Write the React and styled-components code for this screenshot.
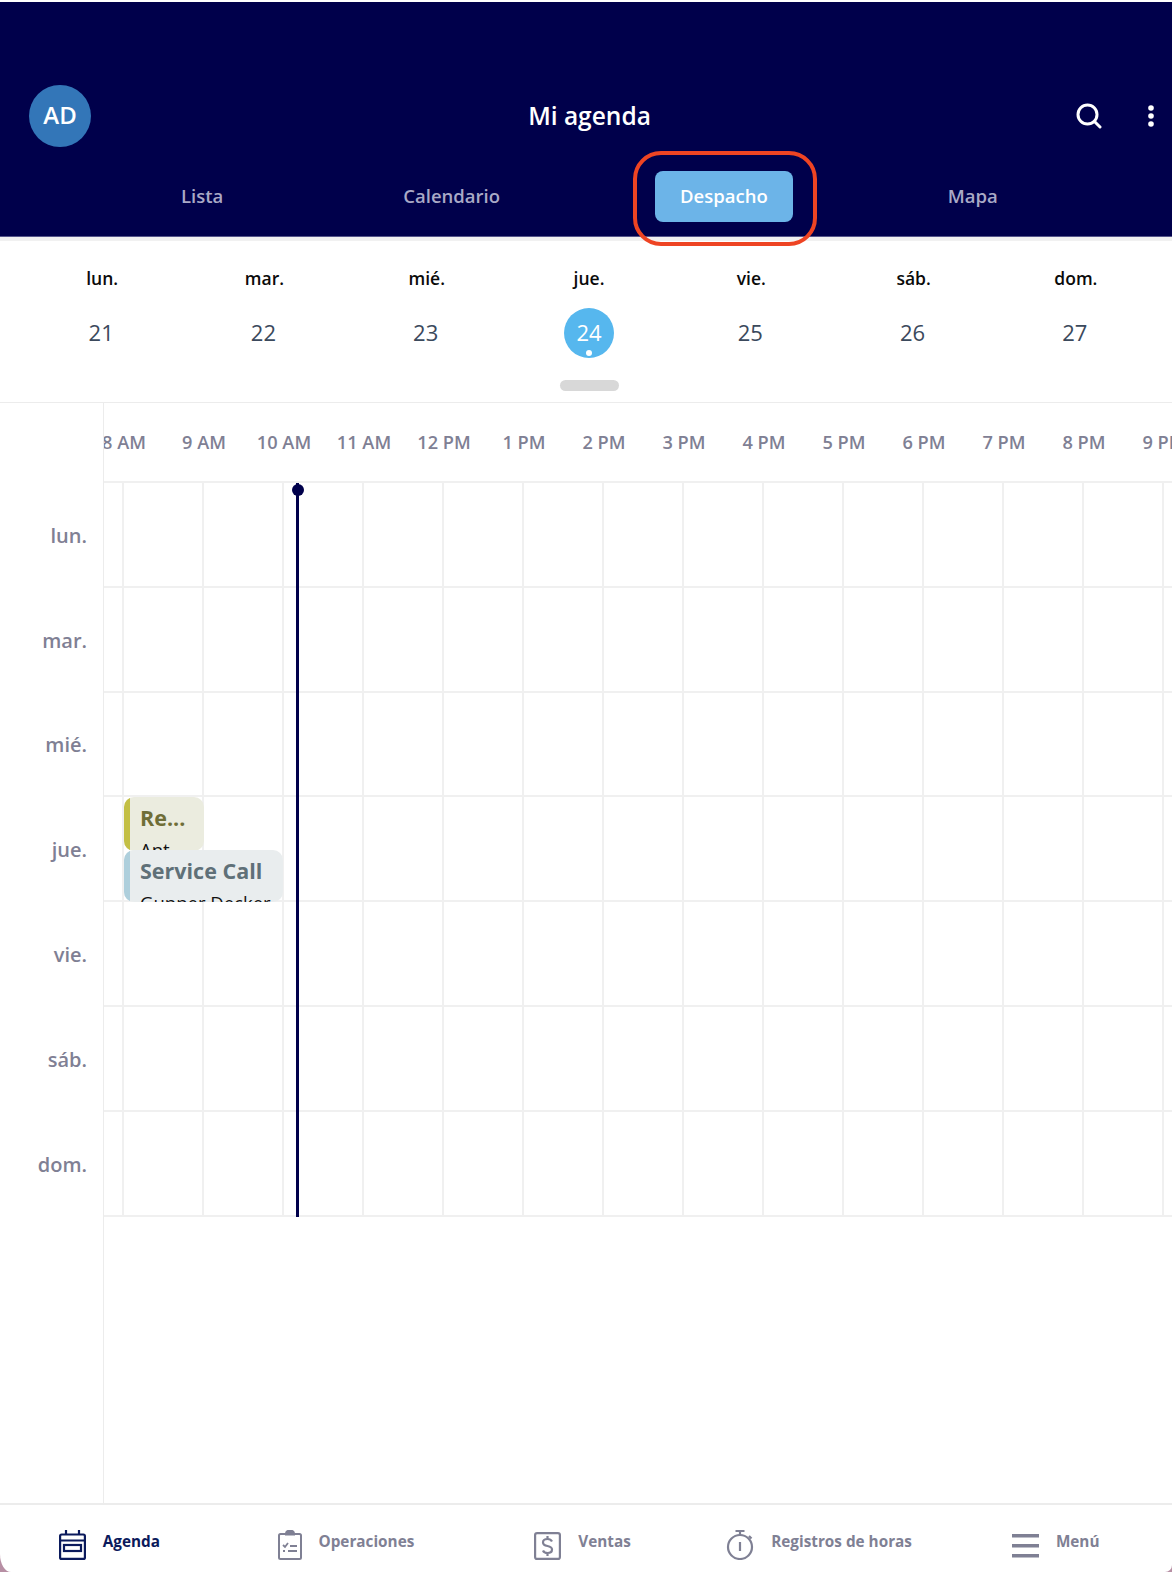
import React from 'react';
import styled, { createGlobalStyle } from 'styled-components';

const GlobalStyle = createGlobalStyle`
	html, body {
		margin: 0;
		padding: 0;
		background: #b78fa4;
	}
	body {
		font-family: 'Open Sans', 'Liberation Sans', sans-serif;
	}
`;

const Page = styled.div`
	height: 1572px;
	display: flex;
	flex-direction: column;
	overflow: hidden;
	background: #ffffff;
	padding-top: 2px;
	box-sizing: border-box;
	border-bottom-left-radius: 11px 18px;
	border-bottom-right-radius: 7px 7px;
`;

const Header = styled.header`
	height: 235px;
	flex-shrink: 0;
	box-sizing: border-box;
	background: #00004b;
	padding-top: 83px;
	border-bottom: 1px solid #55558a;
`;

const HeaderBar = styled.div`
	display: grid;
	grid-template-columns: 1fr auto 1fr;
	align-items: center;
	padding: 0 18px 0 25px;
`;

const Avatar = styled.div`
	width: 62px;
	height: 62px;
	box-sizing: border-box;
	padding-bottom: 3px;
	margin-left: 4px;
	border-radius: 50%;
	background: #3376b8;
	color: #ffffff;
	font-size: 24px;
	font-weight: 600;
	display: flex;
	align-items: center;
	justify-content: center;
`;

const Title = styled.h1`
	margin: 0 0 2px;
	color: #ffffff;
	font-size: 24.5px;
	font-weight: 600;
`;

const HeaderActions = styled.div`
	display: flex;
	justify-content: flex-end;
	align-items: center;
	gap: 46px;
`;

const Tabs = styled.nav`
	display: flex;
	align-items: center;
	gap: 155px;
	height: 51px;
	margin-top: 24px;
	padding-left: 181px;
`;

const Tab = styled.div`
	position: relative;
	color: ${(props) => (props.$active ? '#ffffff' : '#a9a9c6')};
	font-size: 18.5px;
	font-weight: 600;
	line-height: 50px;
	height: 51px;
	padding: 0 ${(props) => (props.$active ? '25px' : '0')};
	border-radius: 8px;
	background: ${(props) => (props.$active ? '#6cb4e8' : 'transparent')};
	&:first-child {
		margin-right: 25px;
	}
`;

// red annotation drawn round the active tab
const Callout = styled.span`
	position: absolute;
	top: -20px;
	left: -22px;
	right: -24px;
	bottom: -24px;
	border: 4px solid #ee4423;
	border-radius: 28px;
	z-index: 2;
`;

const HeaderShadow = styled.div`
	height: 4px;
	flex-shrink: 0;
	background: #f1f1f1;
`;

const Week = styled.section`
	height: 161px;
	flex-shrink: 0;
	box-sizing: border-box;
	padding: 0 15px 0 21px;
	display: flex;
	flex-direction: column;
`;

const WeekDays = styled.div`
	display: grid;
	grid-template-columns: repeat(7, 1fr);
`;

const WeekDay = styled.div`
	display: flex;
	flex-direction: column;
	align-items: center;
`;

const DayName = styled.div`
	margin-top: 25px;
	height: 24px;
	line-height: 24px;
	font-size: 17.5px;
	font-weight: 600;
	color: #0a0a0a;
`;

const DayNumber = styled.div`
	position: relative;
	margin-top: 18px;
	width: 50px;
	height: 50px;
	box-sizing: border-box;
	padding-bottom: 2px;
	padding-right: ${(props) => (props.$today ? '0' : '2px')};
	border-radius: 50%;
	display: flex;
	align-items: center;
	justify-content: center;
	font-size: 22px;
	color: ${(props) => (props.$today ? '#ffffff' : '#3b495c')};
	background: ${(props) => (props.$today ? '#56b7ee' : 'transparent')};
`;

const TodayDot = styled.span`
	position: absolute;
	bottom: 2px;
	left: 22px;
	width: 6px;
	height: 6px;
	border-radius: 50%;
	background: #ffffff;
`;

const Handle = styled.div`
	width: 59px;
	height: 11px;
	margin: 22px auto 0;
	border-radius: 6px;
	background: #d8d8d8;
`;

const Schedule = styled.section`
	flex: 1;
	display: flex;
	min-height: 0;
	border-top: 1px solid #ececec;
`;

const DayColumn = styled.div`
	width: 104px;
	flex-shrink: 0;
	box-sizing: border-box;
	border-right: 1px solid #ececec;
	padding-top: 80px;
`;

const DayLabel = styled.div`
	height: 104.8px;
	display: flex;
	align-items: center;
	justify-content: flex-end;
	padding-right: 16px;
	font-size: 20px;
	font-weight: 600;
	color: #7f8094;
`;

const Timeline = styled.div`
	flex: 1;
	min-width: 0;
	overflow: hidden;
`;

const Hours = styled.div`
	height: 80px;
	box-sizing: border-box;
	display: flex;
	align-items: center;
	margin-left: -20px;
	width: 1300px;
	border-bottom: 2px solid #f0f0f0;
`;

const Hour = styled.div`
	width: 80px;
	flex-shrink: 0;
	text-align: center;
	font-size: 18.2px;
	font-weight: 600;
	color: #7f8094;
`;

const Grid = styled.div`
	position: relative;
	width: 1300px;
`;

const Row = styled.div`
	height: 104.8px;
	box-sizing: border-box;
	display: flex;
	border-bottom: 2px solid #f0f0f0;
`;

const Cell = styled.div`
	width: ${(props) => (props.$first ? '20px' : '80px')};
	flex-shrink: 0;
	box-sizing: border-box;
	border-right: 2px solid #f0f0f0;
`;

const NowLine = styled.div`
	position: absolute;
	top: 0;
	bottom: 0;
	left: 192px;
	width: 3px;
	background: #00004b;
	&::before {
		content: '';
		position: absolute;
		top: 1px;
		left: -4.5px;
		width: 12px;
		height: 12px;
		border-radius: 50%;
		background: #00004b;
	}
`;

const Event = styled.div`
	position: absolute;
	left: 20px;
	top: ${(props) => props.$top}px;
	width: ${(props) => props.$width}px;
	height: ${(props) => props.$height}px;
	box-sizing: border-box;
	overflow: hidden;
	border-radius: 10px;
	background: ${(props) => props.$bg};
	padding: 5px 4px 0 16px;
	&::before {
		content: '';
		position: absolute;
		top: 0;
		bottom: 0;
		left: 0;
		width: 6px;
		background: ${(props) => props.$accent};
	}
`;

const EventTitle = styled.div`
	font-size: 21.5px;
	line-height: 32px;
	font-weight: 700;
	white-space: nowrap;
	color: ${(props) => props.$color};
`;

const EventPerson = styled.div`
	margin-top: 4px;
	font-size: 18.5px;
	line-height: 24px;
	white-space: nowrap;
	color: #111111;
`;

const BottomNav = styled.nav`
	height: 69px;
	flex-shrink: 0;
	box-sizing: border-box;
	border-top: 2px solid #ececec;
	width: 1183px;
	margin-left: -9px;
	display: grid;
	grid-template-columns: repeat(5, 1fr);
	padding-top: 25px;
`;

const NavItem = styled.div`
	display: flex;
	justify-content: center;
	align-items: flex-start;
	gap: 17px;
	height: 32px;
	color: ${(props) => (props.$active ? '#0b1a5c' : '#7f8094')};
`;

const NavLabel = styled.span`
	font-size: 15.3px;
	line-height: 22px;
	font-weight: 700;
	white-space: nowrap;
`;

const SearchIcon = () => (
	<svg width="26" height="26" viewBox="0 0 26 26" fill="none" stroke="#fff" strokeWidth="3" strokeLinecap="round">
		<circle cx="11.5" cy="11.5" r="9.5" />
		<line x1="18.5" y1="18.5" x2="24" y2="24" />
	</svg>
);

const DotsIcon = () => (
	<svg width="6" height="24" viewBox="0 0 6 24" fill="#fff">
		<circle cx="3" cy="4" r="2.8" />
		<circle cx="3" cy="12" r="2.8" />
		<circle cx="3" cy="20" r="2.8" />
	</svg>
);

const CalendarIcon = () => (
	<svg width="27" height="30" viewBox="0 0 27 30" fill="none" stroke="currentColor" strokeWidth="2.2">
		<rect x="1.1" y="4.5" width="24.8" height="24.4" rx="1.5" />
		<path d="M7 0v5M20 0v5M1 10.5h25" />
		<rect x="5" y="15" width="17" height="6" />
	</svg>
);

const ClipboardIcon = () => (
	<svg width="24" height="30" viewBox="0 0 24 30" fill="none" stroke="currentColor" strokeWidth="2">
		<rect x="1" y="4" width="22" height="25" rx="1.5" />
		<path d="M8 4.5V3.5a4 3 0 0 1 8 0v1z" fill="currentColor" />
		<path d="M5 15l2 2 3-4M12 16h7M5 21h2M10 21h9" strokeWidth="1.8" />
	</svg>
);

const DollarIcon = () => (
	<svg width="27" height="30" viewBox="0 0 27 30" fill="none" stroke="currentColor" strokeWidth="2.2">
		<rect x="1.1" y="3.1" width="24.8" height="25.8" rx="2" />
		<path d="M18 11.5c-.8-1.600-2.400-2.500-4.500-2.500-2.700 0-4.500 1.400-4.500 3.500 0 2.200 1.900 3 4.500 3.500s4.500 1.300 4.500 3.500c0 2.100-1.800 3.500-4.500 3.500-2.200 0-3.800-.9-4.500-2.500M13.500 6v3M13.500 23v3" />
	</svg>
);

const TimerIcon = () => (
	<svg width="28" height="30" viewBox="0 0 28 30" fill="none" stroke="currentColor" strokeWidth="2.2">
		<circle cx="14" cy="17" r="12" />
		<path d="M9.5 1h9M14 1v4M23 6l2.500 2.500M14 12v9" />
	</svg>
);

const MenuIcon = () => (
	<svg width="27" height="30" viewBox="0 0 27 30" fill="currentColor">
		<rect y="4" width="27" height="3.5" />
		<rect y="14" width="27" height="3.5" />
		<rect y="24" width="27" height="3.5" />
	</svg>
);

const weekDays = [
	['lun.', 21],
	['mar.', 22],
	['mié.', 23],
	['jue.', 24],
	['vie.', 25],
	['sáb.', 26],
	['dom.', 27],
];

const hours = ['8 AM', '9 AM', '10 AM', '11 AM', '12 PM', '1 PM', '2 PM', '3 PM', '4 PM', '5 PM', '6 PM', '7 PM', '8 PM', '9 PM'];

const navItems = [
	{ label: 'Agenda', icon: <CalendarIcon />, active: true },
	{ label: 'Operaciones', icon: <ClipboardIcon /> },
	{ label: 'Ventas', icon: <DollarIcon /> },
	{ label: 'Registros de horas', icon: <TimerIcon /> },
	{ label: 'Menú', icon: <MenuIcon /> },
];

export default function App() {
	return (
		<Page>
			<GlobalStyle />
			<Header>
				<HeaderBar>
					<Avatar>AD</Avatar>
					<Title>Mi agenda</Title>
					<HeaderActions>
						<SearchIcon />
						<DotsIcon />
					</HeaderActions>
				</HeaderBar>
				<Tabs>
					<Tab>Lista</Tab>
					<Tab>Calendario</Tab>
					<Tab $active>
						Despacho
						<Callout />
					</Tab>
					<Tab>Mapa</Tab>
				</Tabs>
			</Header>
			<HeaderShadow />
			<Week>
				<WeekDays>
					{weekDays.map(([name, num]) => (
						<WeekDay key={name}>
							<DayName>{name}</DayName>
							<DayNumber $today={num === 24}>
								{num}
								{num === 24 && <TodayDot />}
							</DayNumber>
						</WeekDay>
					))}
				</WeekDays>
				<Handle />
			</Week>
			<Schedule>
				<DayColumn>
					{weekDays.map(([name]) => (
						<DayLabel key={name}>{name}</DayLabel>
					))}
				</DayColumn>
				<Timeline>
					<Hours>
						{hours.map((h) => (
							<Hour key={h}>{h}</Hour>
						))}
					</Hours>
					<Grid>
						{weekDays.map(([name]) => (
							<Row key={name}>
								<Cell $first />
								{hours.map((h) => (
									<Cell key={h} />
								))}
							</Row>
						))}
						<NowLine />
						<Event $top={314} $width={80} $height={54} $accent="#c3bf45" $bg="#ebecdf">
							<EventTitle $color="#6f6e37">Re...</EventTitle>
							<EventPerson>Ant</EventPerson>
						</Event>
						<Event $top={367} $width={159} $height={52} $accent="#aecfdc" $bg="#e9edee">
							<EventTitle $color="#5f7078">Service Call</EventTitle>
							<EventPerson>Gunner Decker</EventPerson>
						</Event>
					</Grid>
				</Timeline>
			</Schedule>
			<BottomNav>
				{navItems.map((item) => (
					<NavItem key={item.label} $active={item.active}>
						{item.icon}
						<NavLabel>{item.label}</NavLabel>
					</NavItem>
				))}
			</BottomNav>
		</Page>
	);
}
